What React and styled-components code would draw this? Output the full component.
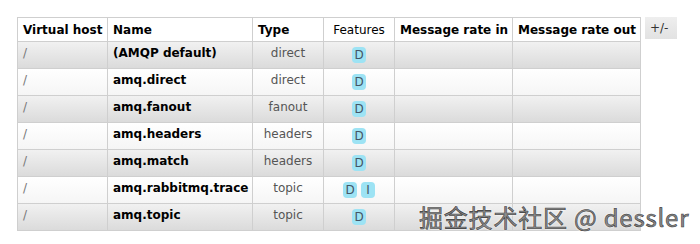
import React from "react";
import styled, { createGlobalStyle } from "styled-components";

const GlobalStyle = createGlobalStyle`
  body {
    margin: 0;
    background: #fff;
    font-family: "DejaVu Sans", Verdana, sans-serif;
  }
`;

const Page = styled.div`
  position: relative;
  width: 700px;
  height: 244px;
  padding: 17px 0 0 17px;
  box-sizing: border-box;
  display: flex;
  align-items: flex-start;
  gap: 4px;
`;

const Table = styled.table`
  width: 623px;
  border-collapse: collapse;
  table-layout: fixed;
  font-size: 12px;
  color: #000;
`;

const Col = styled.col`
  width: ${(p) => p.w}px;
`;

const Th = styled.th`
  height: 23px;
  padding: 0 5px;
  border: 1px solid #cfcfcf;
  background: #fff;
  text-align: ${(p) => (p.center ? "center" : "left")};
  font-weight: ${(p) => (p.light ? "normal" : "bold")};
  white-space: nowrap;
  overflow: hidden;
`;

const Row = styled.tr`
  height: 27px;
  background: ${(p) =>
    p.alt
      ? "linear-gradient(#f1f1f1, #dadada)"
      : "linear-gradient(#ffffff, #f5f5f5)"};
`;

const Td = styled.td`
  padding: 0 5px 5px;
  border: 1px solid #cfcfcf;
  vertical-align: middle;
  white-space: nowrap;
`;

const Vhost = styled(Td)`
  color: #777;
`;

const Name = styled(Td)`
  font-weight: bold;
`;

const Type = styled(Td)`
  text-align: center;
  color: #555;
`;

const Features = styled(Td)`
  text-align: center;
  padding-bottom: 0;
`;

const Badge = styled.span`
  display: inline-block;
  min-width: 10px;
  height: 16px;
  line-height: 16px;
  padding: 0 2px;
  margin: 0 2px;
  border-radius: 4px;
  background: #9de3f4;
  color: #456;
  font-size: 12px;
  text-align: center;
`;

const Toggle = styled.div`
  width: 32px;
  height: 22px;
  line-height: 22px;
  padding-left: 5px;
  box-sizing: border-box;
  font-size: 12px;
  color: #333;
  background: linear-gradient(#eeeeee, #e2e2e2);
`;

const Watermark = styled.div`
  position: absolute;
  left: 419px;
  top: 199px;
  font-family: "Noto Sans CJK SC", "DejaVu Sans", sans-serif;
  font-size: 24px;
  color: #8c8c8c;
  -webkit-text-stroke: 0.6px #3a3a3a;
  text-shadow: 0 0 2px #fff, 0 0 2px #fff;
  white-space: nowrap;
  letter-spacing: 0.8px;
`;

const columns = [90, 145, 71, 71, 118, 128];

const exchanges = [
  { name: "(AMQP default)", type: "direct", features: ["D"] },
  { name: "amq.direct", type: "direct", features: ["D"] },
  { name: "amq.fanout", type: "fanout", features: ["D"] },
  { name: "amq.headers", type: "headers", features: ["D"] },
  { name: "amq.match", type: "headers", features: ["D"] },
  { name: "amq.rabbitmq.trace", type: "topic", features: ["D", "I"] },
  { name: "amq.topic", type: "topic", features: ["D"] },
];

export default function App() {
  return (
    <Page>
      <GlobalStyle />
      <Table>
        <colgroup>
          {columns.map((w, i) => (
            <Col key={i} w={w} />
          ))}
        </colgroup>
        <thead>
          <tr>
            <Th>Virtual host</Th>
            <Th>Name</Th>
            <Th>Type</Th>
            <Th center light>
              Features
            </Th>
            <Th>Message rate in</Th>
            <Th>Message rate out</Th>
          </tr>
        </thead>
        <tbody>
          {exchanges.map((ex, i) => (
            <Row key={ex.name} alt={i % 2 === 0}>
              <Vhost>/</Vhost>
              <Name>{ex.name}</Name>
              <Type>{ex.type}</Type>
              <Features>
                {ex.features.map((f) => (
                  <Badge key={f}>{f}</Badge>
                ))}
              </Features>
              <Td />
              <Td />
            </Row>
          ))}
        </tbody>
      </Table>
      <Toggle>+/-</Toggle>
      <Watermark>掘金技术社区 @ dessler</Watermark>
    </Page>
  );
}
